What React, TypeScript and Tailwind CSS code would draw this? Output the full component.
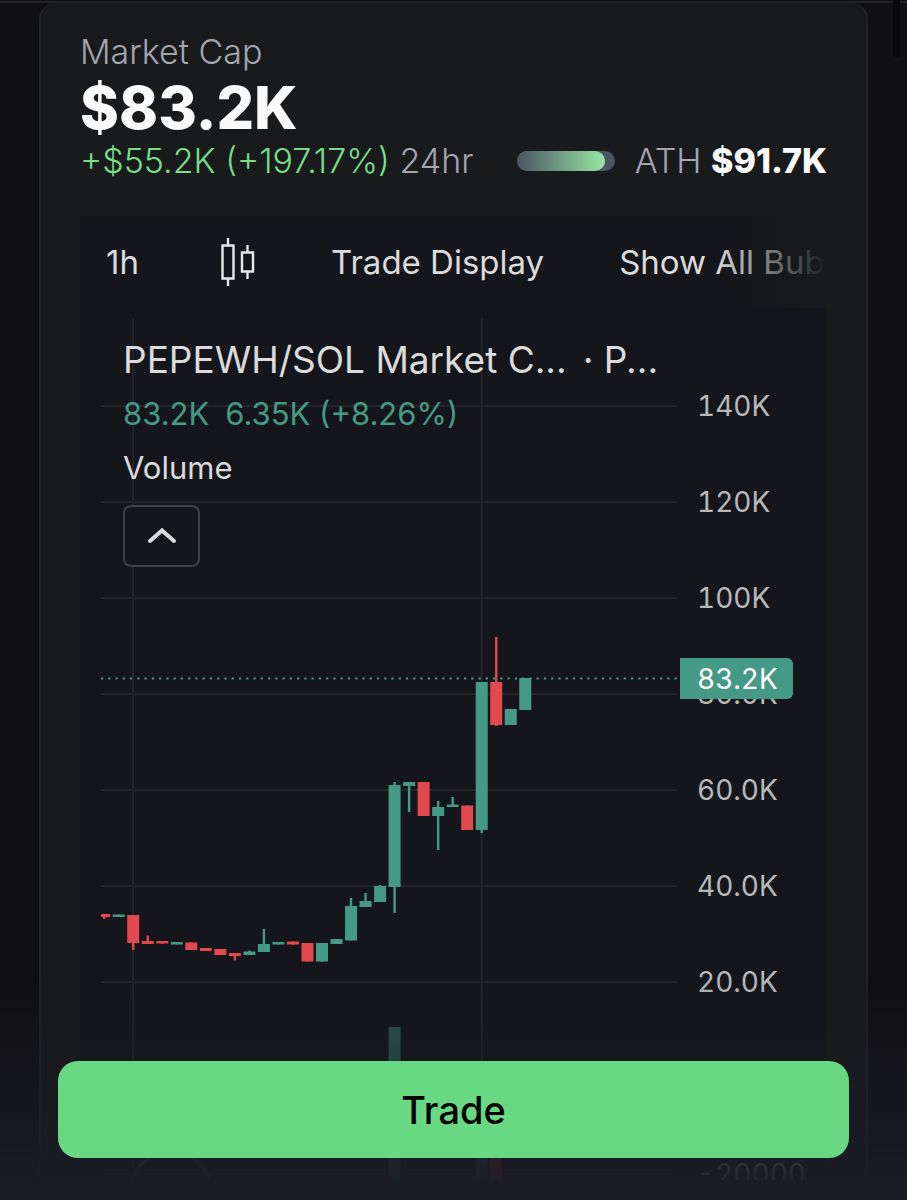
import React from 'react';

interface Candle {
  up: boolean;
  top: number;
  bottom: number;
  high?: number;
  low?: number;
}

const UP = '#459a86';
const DOWN = '#e2494f';
const GRID = '#232529';
const STEP = 14.52;

const candles: Candle[] = [
  { up: false, top: 606, bottom: 609, low: 611 },
  { up: true, top: 606.5, bottom: 609 },
  { up: false, top: 607, bottom: 635, low: 642 },
  { up: false, top: 633, bottom: 636, high: 627.5 },
  { up: false, top: 633, bottom: 635.5 },
  { up: true, top: 634, bottom: 636.5 },
  { up: false, top: 634.5, bottom: 642 },
  { up: false, top: 640, bottom: 643 },
  { up: false, top: 641, bottom: 647 },
  { up: false, top: 645, bottom: 648, low: 652.5 },
  { up: true, top: 643.5, bottom: 647, high: 642.5 },
  { up: true, top: 636, bottom: 644, high: 621 },
  { up: true, top: 634, bottom: 636.5 },
  { up: false, top: 633.5, bottom: 636.5 },
  { up: false, top: 635, bottom: 653.5 },
  { up: true, top: 635, bottom: 653.5 },
  { up: true, top: 631, bottom: 636 },
  { up: true, top: 598, bottom: 632.5, high: 590 },
  { up: true, top: 593, bottom: 599, high: 585 },
  { up: true, top: 578, bottom: 594, high: 577 },
  { up: true, top: 477, bottom: 579, high: 474, low: 605 },
  { up: true, top: 474, bottom: 478, low: 504 },
  { up: false, top: 474, bottom: 508 },
  { up: true, top: 499, bottom: 508, high: 493, low: 542 },
  { up: true, top: 496.5, bottom: 499, high: 489 },
  { up: false, top: 497.5, bottom: 522 },
  { up: true, top: 374, bottom: 522, low: 525 },
  { up: false, top: 374, bottom: 417, high: 329, low: 418 },
  { up: true, top: 401, bottom: 417 },
  { up: true, top: 370, bottom: 402 },
];

const volumes = [
  { index: 20, top: 719, up: true },
  { index: 26, top: 790, up: true },
  { index: 27, top: 820, up: false },
];

const ticks = ['140K', '120K', '100K', '80.0K', '60.0K', '40.0K', '20.0K', '', '-20000'];

const centerOf = (i: number) => 3.2 + i * STEP;

const CandlesIcon = () => (
  <svg width="36" height="50" viewBox="0 0 36 50" fill="none" stroke="#e8e8e8" strokeWidth="2.4">
    <path d="M8 0v7M8 41v7M2.5 7.5h11v33h-11zM27.5 7v7M27.5 34v7M22 14.5h11v19H22z" />
  </svg>
);

const Header = () => (
  <header>
    <p className="text-[34px] leading-[44px] font-light text-[#a5a5b0]">Market Cap</p>
    <p className="text-[59px] leading-[68px] font-extrabold text-[#fafafa]">$83.2K</p>
    <div className="flex items-center justify-between text-[34px] leading-[38px] font-light whitespace-nowrap">
      <p className="text-[#a5a5b0]">
        <span className="text-[#77dd88]">+$55.2K (+197.17%)</span> 24hr
      </p>
      <div className="flex items-center gap-5">
        <div className="h-5 w-[98px] rounded-full bg-[#4b5563]">
          <div className="h-full w-[90%] rounded-full bg-linear-to-r from-[#4b5563] to-[#98eaa5]" />
        </div>
        <p className="text-[#a5a5b0]">
          ATH <span className="font-extrabold text-[#fafafa]">$91.7K</span>
        </p>
      </div>
    </div>
  </header>
);

const Toolbar = () => (
  <div className="relative flex h-[92px] items-center gap-[75px] overflow-hidden pt-0.5 pl-[26px] text-[33px] whitespace-nowrap text-[#dbdbdb]">
    <button className="w-[39px] shrink-0 text-left">1h</button>
    <button aria-label="Chart type" className="shrink-0">
      <CandlesIcon />
    </button>
    <button className="shrink-0">Trade Display</button>
    <button className="shrink-0">Show All Bubbles</button>
    <div className="pointer-events-none absolute inset-y-0 right-0 w-28 bg-linear-to-r from-[#191a1b]/0 to-[#191a1b]" />
  </div>
);

const Plot = () => (
  <svg className="block h-[872px] min-w-0 flex-1" aria-label="Market cap candles">
    {ticks.map((_, i) => (
      <line key={i} x1="0" x2="100%" y1={98 + i * 96} y2={98 + i * 96} stroke={GRID} strokeWidth="2" />
    ))}
    {[2, 26].map((i) => (
      <line key={i} x1={centerOf(i)} x2={centerOf(i)} y1="10" y2="872" stroke={GRID} strokeWidth="2" />
    ))}
    {volumes.map((v) => (
      <rect key={v.index} x={centerOf(v.index) - 6} y={v.top} width="12" height={872 - v.top} fill={v.up ? UP : DOWN} opacity="0.5" />
    ))}
    <line x1="0" x2="100%" y1="370.5" y2="370.5" stroke={UP} strokeWidth="2.2" strokeDasharray="2.2 5.06" />
    {candles.map((c, i) => (
      <g key={i} fill={c.up ? UP : DOWN}>
        <rect
          x={centerOf(i) - 1.2}
          y={c.high ?? c.top}
          width="2.4"
          height={(c.low ?? c.bottom) - (c.high ?? c.top)}
        />
        <rect x={centerOf(i) - 6} y={c.top} width="12" height={c.bottom - c.top} />
      </g>
    ))}
    <circle cx="70" cy="885" r="41" fill="none" stroke="#44454b" strokeWidth="2.5" />
  </svg>
);

const PriceAxis = () => (
  <div className="relative h-[872px] w-[150px] shrink-0 overflow-hidden pt-[50px] text-[28px] text-[#b8b8bb] tabular-nums">
    {ticks.map((t, i) => (
      <div key={i} className="flex h-24 items-center pl-5">
        {t}
      </div>
    ))}
    <div className="absolute top-[350px] left-[3px] flex h-[41px] w-[113px] items-center rounded-r-md bg-[#459a86] pl-[17px] text-white">
      83.2K
    </div>
  </div>
);

const Legend = () => (
  <div className="absolute top-[25px] left-[43px] text-[#dbdbdb]">
    <p className="flex gap-4 text-[37px] leading-[54px] whitespace-nowrap">
      <span>PEPEWH/SOL Market C...</span>
      <span>· P...</span>
    </p>
    <p className="flex gap-4 text-[31px] leading-[54px] whitespace-nowrap text-[#459a86]">
      <span>83.2K</span>
      <span>6.35K (+8.26%)</span>
    </p>
    <p className="text-[31px] leading-[54px]">Volume</p>
    <button
      aria-label="Collapse legend"
      className="mt-2.5 flex h-[62px] w-[77px] items-center justify-center rounded-lg border-2 border-[#404146] bg-[#15161b]"
    >
      <svg width="32" height="20" viewBox="0 0 32 20" fill="none" stroke="#dbdbdb" strokeWidth="4" strokeLinecap="round">
        <path d="M4 15L16 4.5L28 15" />
      </svg>
    </button>
  </div>
);

export default function App() {
  return (
    <div className="min-h-screen overflow-hidden bg-[#101012] pt-px font-['Inter',sans-serif]">
      <main className="border-t-2 border-[#232429] pb-5">
        <section className="mx-[39px] rounded-t-2xl border-x-2 border-[#232429] bg-[#191a1b] px-[39px] pt-[27px]">
          <Header />
          <div className="mt-9 bg-[#15161b]">
            <Toolbar />
            <div className="relative flex pl-[21px]">
              <Plot />
              <PriceAxis />
              <Legend />
            </div>
          </div>
        </section>
      </main>

      <div className="fixed top-0 right-[7px] h-[57px] w-[7px] rounded-b-full bg-[#08080a]" />

      <div className="fixed inset-x-0 bottom-0">
        <div className="bg-linear-to-b from-[#1b1c26]/0 to-[#1b1c26]/95 px-[58px] pt-[81px] pb-[22px]">
          <button className="h-[97px] w-full rounded-[20px] bg-[#68d982] pt-0.5 text-[38px] font-medium text-black">Trade</button>
        </div>
        <div className="h-5 bg-[#1b1c26]" />
      </div>
    </div>
  );
}
